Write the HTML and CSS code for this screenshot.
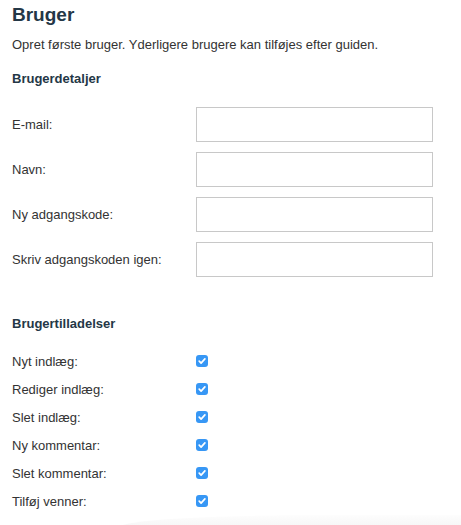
FILE: index.html
```html
<!DOCTYPE html>
<html lang="da">
<head>
    <meta charset="UTF-8">
    <title>Bruger</title>
	<link rel="stylesheet" href="styles.css">
</head>
<body>
	<h1 class="title">Bruger</h1>
	<p class="intro">Opret første bruger. Yderligere brugere kan tilføjes efter guiden.</p>

	<!-- detaljer -->
	<h3 class="section">Brugerdetaljer</h3>
	<form class="details">
		<label class="row">
			<span class="label">E-mail:</span>
			<input type="text" name="email" class="field">
		</label>
		<label class="row">
			<span class="label">Navn:</span>
			<input type="text" name="name" class="field">
		</label>
		<label class="row">
			<span class="label">Ny adgangskode:</span>
			<input type="password" name="pass" class="field">
		</label>
		<label class="row">
			<span class="label">Skriv adgangskoden igen:</span>
			<input type="password" name="pass2" class="field">
		</label>
	</form>

	<!-- tilladelser -->
	<h3 class="section perms-title">Brugertilladelser</h3>
	<div class="perms">
		<div class="perm"><span class="label">Nyt indlæg:</span><span class="check"><svg width="12" height="12" viewBox="0 0 12 12"><path d="M3.2 6.2 L5.1 8.1 L8.9 3.9" fill="none" stroke="#fff" stroke-width="1.7" stroke-linecap="round" stroke-linejoin="round"/></svg></span></div>
		<div class="perm"><span class="label">Rediger indlæg:</span><span class="check"><svg width="12" height="12" viewBox="0 0 12 12"><path d="M3.2 6.2 L5.1 8.1 L8.9 3.9" fill="none" stroke="#fff" stroke-width="1.7" stroke-linecap="round" stroke-linejoin="round"/></svg></span></div>
		<div class="perm"><span class="label">Slet indlæg:</span><span class="check"><svg width="12" height="12" viewBox="0 0 12 12"><path d="M3.2 6.2 L5.1 8.1 L8.9 3.9" fill="none" stroke="#fff" stroke-width="1.7" stroke-linecap="round" stroke-linejoin="round"/></svg></span></div>
		<div class="perm"><span class="label">Ny kommentar:</span><span class="check"><svg width="12" height="12" viewBox="0 0 12 12"><path d="M3.2 6.2 L5.1 8.1 L8.9 3.9" fill="none" stroke="#fff" stroke-width="1.7" stroke-linecap="round" stroke-linejoin="round"/></svg></span></div>
		<div class="perm"><span class="label">Slet kommentar:</span><span class="check"><svg width="12" height="12" viewBox="0 0 12 12"><path d="M3.2 6.2 L5.1 8.1 L8.9 3.9" fill="none" stroke="#fff" stroke-width="1.7" stroke-linecap="round" stroke-linejoin="round"/></svg></span></div>
		<div class="perm"><span class="label">Tilføj venner:</span><span class="check"><svg width="12" height="12" viewBox="0 0 12 12"><path d="M3.2 6.2 L5.1 8.1 L8.9 3.9" fill="none" stroke="#fff" stroke-width="1.7" stroke-linecap="round" stroke-linejoin="round"/></svg></span></div>
	</div>
	<div class="fade"></div>
</body>
</html>
```

FILE: styles.css
```css
body{
	margin: 0;
	padding: 0 12px;
	background: #fff;
	color: #333;
	font-family: "Liberation Sans", Arial, sans-serif;
	font-size: 13px;
	overflow: hidden;
}
.title{
	margin: 4px 0 0;
	font-size: 19px;
	line-height: 22px;
	color: #243746;
}
.intro{
	margin: 10px 0 0;
	line-height: 18px;
}
.section{
	margin: 16px 0 0;
	font-size: 13px;
	line-height: 18px;
	color: #243746;
}
.details{
	margin-top: 19px;
	display: flex;
	flex-direction: column;
	gap: 10px;
}
.row{
	display: grid;
	grid-template-columns: 184px 237px;
	align-items: center;
	height: 35px;
}
.field{
	box-sizing: border-box;
	width: 237px;
	height: 35px;
	margin: 0;
	padding: 4px 6px;
	border: 1px solid #c8c8c8;
	border-radius: 0;
	outline: none;
	font: inherit;
}
.perms-title{
	margin-top: 38px;
}
.perms{
	margin-top: 14px;
}
.perm{
	display: grid;
	grid-template-columns: 184px 12px;
	align-items: center;
	height: 28px;
}
.check{
	display: block;
	width: 12px;
	height: 12px;
	border-radius: 3px;
	background: #3797f5;
}
.check svg{
	display: block;
}
.fade{
	margin: 0 -12px 0 108px;
	height: 12px;
	border-top-left-radius: 60% 100%;
	background: linear-gradient(to bottom, #fdfdfd, #f6f6f6);
}
```
